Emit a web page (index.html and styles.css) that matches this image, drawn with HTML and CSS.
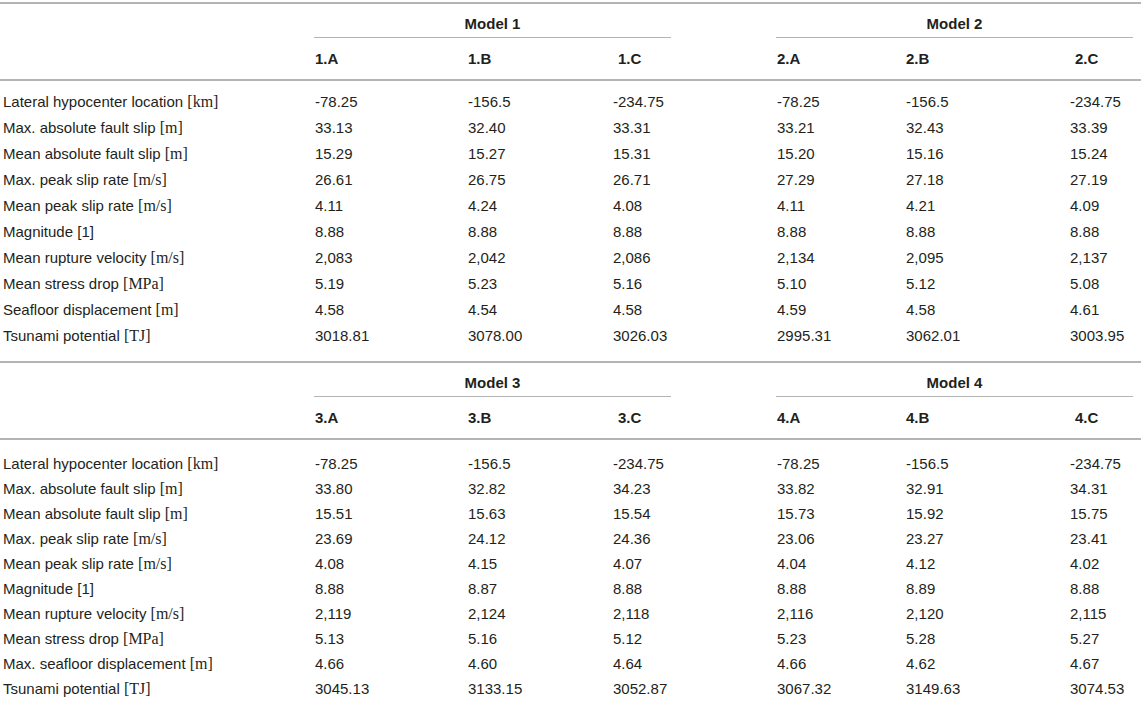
FILE: index.html
```
<!DOCTYPE html>
<html lang="en">
<head>
  <meta charset="UTF-8" />
  <title>Rupture and tsunami source parameters</title>
  <link rel="stylesheet" href="styles.css">
</head>
<body>
  <table class="results">
    <colgroup>
      <col class="c-label"><col class="c-a"><col class="c-b"><col class="c-c"><col class="c-a2"><col class="c-b2"><col class="c-c2">
    </colgroup>
    <thead>
      <tr class="model-row">
        <th></th>
        <th colspan="3"><div class="model-title">Model 1</div></th>
        <th colspan="3"><div class="model-title">Model 2</div></th>
      </tr>
      <tr class="sub-row">
        <th></th>
        <th>1.A</th><th>1.B</th><th class="col-c">1.C</th>
        <th>2.A</th><th>2.B</th><th class="col-c">2.C</th>
      </tr>
    </thead>
    <tbody>
      <tr><td>Lateral hypocenter location <span class="unit">[km]</span></td><td>-78.25</td><td>-156.5</td><td>-234.75</td><td>-78.25</td><td>-156.5</td><td>-234.75</td></tr>
      <tr><td>Max. absolute fault slip <span class="unit">[m]</span></td><td>33.13</td><td>32.40</td><td>33.31</td><td>33.21</td><td>32.43</td><td>33.39</td></tr>
      <tr><td>Mean absolute fault slip <span class="unit">[m]</span></td><td>15.29</td><td>15.27</td><td>15.31</td><td>15.20</td><td>15.16</td><td>15.24</td></tr>
      <tr><td>Max. peak slip rate <span class="unit">[m/s]</span></td><td>26.61</td><td>26.75</td><td>26.71</td><td>27.29</td><td>27.18</td><td>27.19</td></tr>
      <tr><td>Mean peak slip rate <span class="unit">[m/s]</span></td><td>4.11</td><td>4.24</td><td>4.08</td><td>4.11</td><td>4.21</td><td>4.09</td></tr>
      <tr><td>Magnitude [1]</td><td>8.88</td><td>8.88</td><td>8.88</td><td>8.88</td><td>8.88</td><td>8.88</td></tr>
      <tr><td>Mean rupture velocity <span class="unit">[m/s]</span></td><td>2,083</td><td>2,042</td><td>2,086</td><td>2,134</td><td>2,095</td><td>2,137</td></tr>
      <tr><td>Mean stress drop <span class="unit">[MPa]</span></td><td>5.19</td><td>5.23</td><td>5.16</td><td>5.10</td><td>5.12</td><td>5.08</td></tr>
      <tr><td>Seafloor displacement <span class="unit">[m]</span></td><td>4.58</td><td>4.54</td><td>4.58</td><td>4.59</td><td>4.58</td><td>4.61</td></tr>
      <tr><td>Tsunami potential <span class="unit">[TJ]</span></td><td>3018.81</td><td>3078.00</td><td>3026.03</td><td>2995.31</td><td>3062.01</td><td>3003.95</td></tr>
    </tbody>
  </table>

  <table class="results compact">
    <colgroup>
      <col class="c-label"><col class="c-a"><col class="c-b"><col class="c-c"><col class="c-a2"><col class="c-b2"><col class="c-c2">
    </colgroup>
    <thead>
      <tr class="model-row">
        <th></th>
        <th colspan="3"><div class="model-title">Model 3</div></th>
        <th colspan="3"><div class="model-title">Model 4</div></th>
      </tr>
      <tr class="sub-row">
        <th></th>
        <th>3.A</th><th>3.B</th><th class="col-c">3.C</th>
        <th>4.A</th><th>4.B</th><th class="col-c">4.C</th>
      </tr>
    </thead>
    <tbody>
      <tr><td>Lateral hypocenter location <span class="unit">[km]</span></td><td>-78.25</td><td>-156.5</td><td>-234.75</td><td>-78.25</td><td>-156.5</td><td>-234.75</td></tr>
      <tr><td>Max. absolute fault slip <span class="unit">[m]</span></td><td>33.80</td><td>32.82</td><td>34.23</td><td>33.82</td><td>32.91</td><td>34.31</td></tr>
      <tr><td>Mean absolute fault slip <span class="unit">[m]</span></td><td>15.51</td><td>15.63</td><td>15.54</td><td>15.73</td><td>15.92</td><td>15.75</td></tr>
      <tr><td>Max. peak slip rate <span class="unit">[m/s]</span></td><td>23.69</td><td>24.12</td><td>24.36</td><td>23.06</td><td>23.27</td><td>23.41</td></tr>
      <tr><td>Mean peak slip rate <span class="unit">[m/s]</span></td><td>4.08</td><td>4.15</td><td>4.07</td><td>4.04</td><td>4.12</td><td>4.02</td></tr>
      <tr><td>Magnitude [1]</td><td>8.88</td><td>8.87</td><td>8.88</td><td>8.88</td><td>8.89</td><td>8.88</td></tr>
      <tr><td>Mean rupture velocity <span class="unit">[m/s]</span></td><td>2,119</td><td>2,124</td><td>2,118</td><td>2,116</td><td>2,120</td><td>2,115</td></tr>
      <tr><td>Mean stress drop <span class="unit">[MPa]</span></td><td>5.13</td><td>5.16</td><td>5.12</td><td>5.23</td><td>5.28</td><td>5.27</td></tr>
      <tr><td>Max. seafloor displacement <span class="unit">[m]</span></td><td>4.66</td><td>4.60</td><td>4.64</td><td>4.66</td><td>4.62</td><td>4.67</td></tr>
      <tr><td>Tsunami potential <span class="unit">[TJ]</span></td><td>3045.13</td><td>3133.15</td><td>3052.87</td><td>3067.32</td><td>3149.63</td><td>3074.53</td></tr>
    </tbody>
  </table>
</body>
</html>
```

FILE: styles.css
```
body {
  margin: 0;
  padding-top: 2px;
  font-family: "Liberation Sans", Arial, sans-serif;
  font-size: 15px;
  color: #231f20;
  background-color: #fff;
}
.results {
  width: 1141px;
  table-layout: fixed;
  border-collapse: collapse;
  border-top: 2px solid #b4b4b4;
}
.c-label { width: 312px; }
.c-a { width: 153px; }
.c-b { width: 145px; }
.c-c { width: 164px; }
.c-a2 { width: 129px; }
.c-b2 { width: 164px; }
.c-c2 { width: 74px; }
.results th,
.results td {
  padding: 4px 0 4px 3px;
  line-height: 18px;
  text-align: left;
  white-space: nowrap;
  font-weight: normal;
}
.results thead th {
  font-weight: bold;
}
.model-row th {
  padding: 0;
}
.model-title {
  width: 357px;
  margin-left: 2px;
  padding: 11px 0 4px;
  text-align: center;
  border-bottom: 1px solid #b4b4b4;
}
.sub-row th {
  padding: 12px 0 11px 3px;
  border-bottom: 2px solid #b4b4b4;
}
.sub-row th.col-c {
  padding-left: 8px;
}
.results tbody tr:first-child td {
  padding-top: 12px;
}
.results tbody tr:last-child td {
  padding-bottom: 16px;
}
.results.compact tbody td {
  padding-top: 3.5px;
  padding-bottom: 3.5px;
}
.results.compact tbody tr:first-child td {
  padding-top: 15px;
}
.unit {
  font-family: "Liberation Serif", "Times New Roman", serif;
  font-size: 16px;
}
```
